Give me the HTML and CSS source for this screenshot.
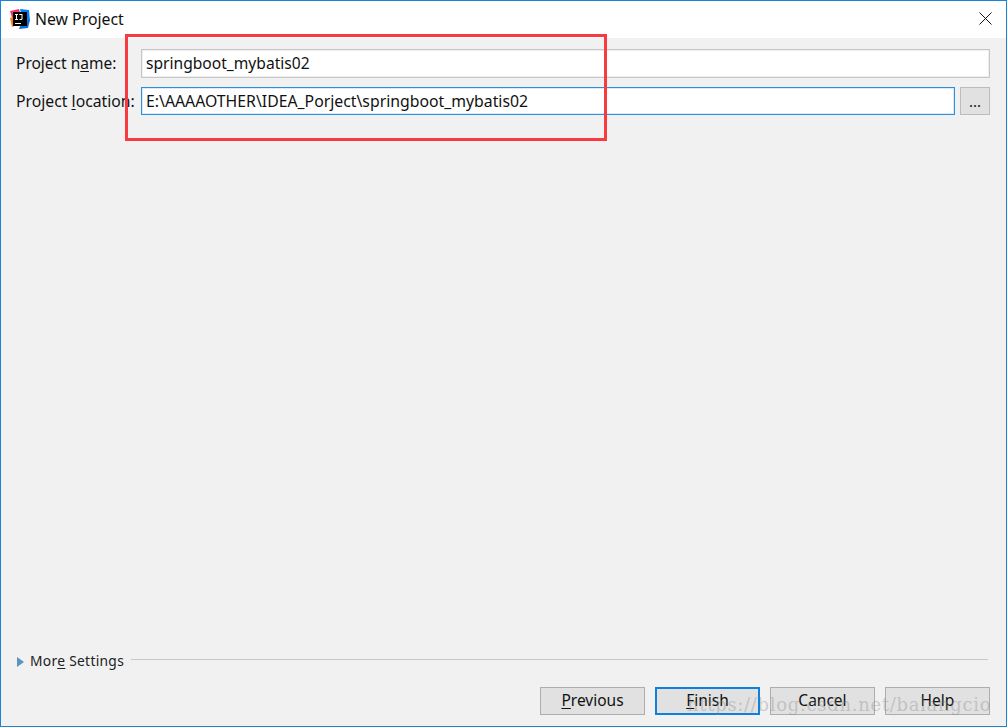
FILE: index.html
```html
<!DOCTYPE html>
<html lang="en">
<head>
<meta charset="utf-8">
<title>New Project</title>
<link rel="stylesheet" href="styles.css">
</head>
<body>
<div class="window">
  <header class="titlebar">
    <svg class="logo" width="20" height="20" viewBox="0 0 20 20">
      <path d="M0 2 L9 0 L11 7 L3 12 Z" fill="#f0386b"/>
      <path d="M0 9 L6 7 L8 15 L2 18 Z" fill="#f97a12"/>
      <path d="M10 0 L19 1 L20 12 L12 8 Z" fill="#087cfa"/>
      <path d="M13 10 L20 11 L18 19 L9 20 Z" fill="#0a6ddb"/>
      <rect x="3" y="3" width="14" height="14" fill="#000"/>
      <rect x="5" y="14" width="6" height="1" fill="#fff"/>
      <path d="M5 5h3v1h-1v4h1v1h-3v-1h1v-4h-1z M9.500 5h3v4.500c0 1-.6 1.500-1.500 1.500h-1.500v-1h1.500c.3 0 .5-.2.5-.5v-3.500h-2.500z" fill="#fff"/>
    </svg>
    <span class="title">New Project</span>
    <svg class="close" width="13" height="13" viewBox="0 0 13 13">
      <path d="M.5.5 L12.500 12.500 M12.500.5 L.5 12.500" stroke="#111" stroke-width="1" fill="none"/>
    </svg>
  </header>
  <main class="content">
    <div class="form">
      <label class="label">Project n<u>a</u>me:</label>
      <div class="field">springboot_mybatis02</div>
      <label class="label label-location">Project <u>l</u>ocation:</label>
      <div class="location">
        <div class="field focused">E:\AAAAOTHER\IDEA_Porject\springboot_mybatis02</div>
        <div class="browse">...</div>
      </div>
    </div>
    <div class="more">
      <svg class="arrow" width="7" height="10" viewBox="0 0 7 10"><path d="M0 0 L7 5 L0 10 Z" fill="#5d93bd"/></svg>
      <span class="more-text">Mor<u>e</u> Settings</span>
      <span class="rule"></span>
    </div>
    <footer class="buttons">
      <div class="btn"><u>P</u>revious</div>
      <div class="btn default"><u>F</u>inish</div>
      <div class="btn">Cancel</div>
      <div class="btn">Help</div>
    </footer>
  </main>
  <div class="highlight"></div>
  <div class="watermark">https://blog.csdn.net/balangcio</div>
</div>
</body>
</html>
```
FILE: styles.css
```css
* { box-sizing: border-box; }
html, body { margin: 0; padding: 0; }
body {
  width: 1007px;
  height: 727px;
  overflow: hidden;
  font-family: "Noto Sans", "Open Sans", sans-serif;
  font-size: 15.500px;
  color: #111;
}
u { text-underline-offset: 2px; }
.window {
  position: relative;
  width: 1007px;
  height: 727px;
  border: 1px solid #1883d7;
  display: flex;
  flex-direction: column;
  background: #f1f1f1;
}
.titlebar {
  height: 37px;
  flex: none;
  background: #fff;
  display: flex;
  align-items: center;
  padding: 0 14px 2px 9px;
}
.logo { flex: none; }
.title { margin-left: 5px; font-size: 15.800px; line-height: 20px; }
.close { margin-left: auto; margin-top: -1px; }
.content {
  flex: 1;
  display: flex;
  flex-direction: column;
  padding: 11px 16px 11px 15px;
}
.form {
  display: grid;
  grid-template-columns: 125px 1fr;
  grid-template-rows: 29px 28px;
  row-gap: 9px;
  align-items: center;
}
.label { white-space: nowrap; padding-bottom: 2px; }
.label-location { padding-bottom: 0; font-size: 15.750px; }
.field {
  height: 100%;
  flex: 1;
  background: #fff;
  border: 1px solid #c6c6c6;
  box-shadow: inset 0 0 0 1px #efefef;
  display: flex;
  align-items: center;
  padding: 0 4px 2px;
  font-size: 15.600px;
}
.field.focused {
  border-color: #2f8fd8;
  box-shadow: inset 0 0 0 1px #d8ebf8;
  padding-bottom: 0;
  font-size: 15.800px;
}
.location {
  height: 100%;
  display: flex;
  gap: 5px;
}
.browse {
  width: 30px;
  flex: none;
  background: #e1e1e1;
  border: 1px solid #bcbcbc;
  display: flex;
  align-items: center;
  justify-content: center;
  font-size: 15px;
}
.more {
  margin-top: auto;
  display: flex;
  align-items: center;
  height: 20px;
  padding: 0 2px 0 1px;
}
.arrow { flex: none; margin-top: 1px; }
.more-text { margin-left: 6px; font-size: 13.800px; line-height: 18px; letter-spacing: .3px; color: #222; }
.rule {
  flex: 1;
  height: 1px;
  background: #c8c8c8;
  margin-left: 7px;
  margin-top: -4px;
}
.buttons {
  margin-top: 16px;
  display: flex;
  justify-content: flex-end;
  gap: 10px;
}
.btn {
  width: 105px;
  height: 28px;
  background: #e1e1e1;
  border: 1px solid #adadad;
  display: flex;
  align-items: center;
  justify-content: center;
  white-space: pre;
  padding-bottom: 3px;
  font-size: 15.500px;
}
.btn.default { border: 2px solid #0f80dd; }
.highlight {
  position: absolute;
  left: 124px;
  top: 33px;
  width: 482px;
  height: 107px;
  border: 3px solid #f93a3f;
  pointer-events: none;
}
.watermark {
  position: absolute;
  left: 686px;
  top: 693px;
  font-family: "DejaVu Serif", serif;
  font-size: 18px;
  letter-spacing: .7px;
  color: rgba(130, 130, 130, .35);
  white-space: nowrap;
}
```
